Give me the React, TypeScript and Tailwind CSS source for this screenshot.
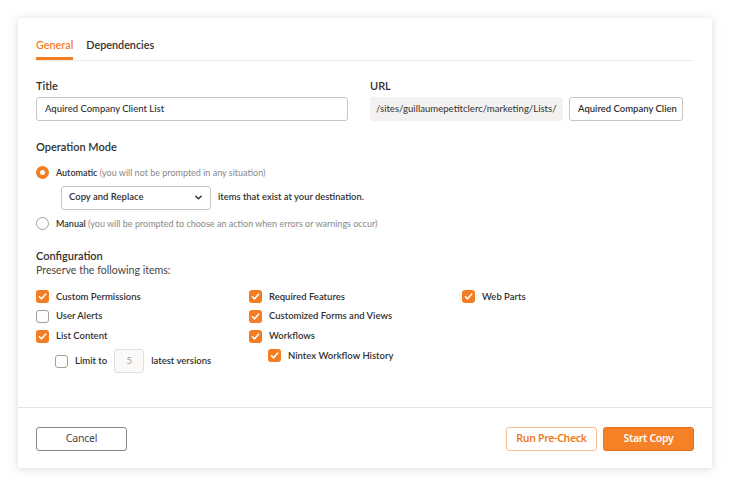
import React from "react";

function Check({ checked }: { checked: boolean }) {
  return checked ? (
    <span className="flex h-[13px] w-[13px] shrink-0 items-center justify-center rounded-[3px] bg-[#f47c22]">
      <svg width="9" height="9" viewBox="0 0 10 10" fill="none">
        <path d="M1.6 5.2 L4 7.6 L8.6 2.2" stroke="white" strokeWidth="1.7" strokeLinecap="round" strokeLinejoin="round" />
      </svg>
    </span>
  ) : (
    <span className="h-[13px] w-[13px] shrink-0 rounded-[3px] border border-[#a19f9d] bg-white" />
  );
}

function CheckItem({ checked, label, className = "" }: { checked: boolean; label: string; className?: string }) {
  return (
    <div className={"flex h-[19.7px] items-center gap-[7px] " + className}>
      <Check checked={checked} />
      <span className="text-[9.5px] font-semibold text-[#323130]">{label}</span>
    </div>
  );
}

function Radio({ checked }: { checked: boolean }) {
  return checked ? (
    <span className="flex h-[13px] w-[13px] shrink-0 items-center justify-center rounded-full bg-[#f47c22]">
      <span className="h-[5px] w-[5px] rounded-full bg-white" />
    </span>
  ) : (
    <span className="h-[13px] w-[13px] shrink-0 rounded-full border border-[#a19f9d] bg-white" />
  );
}

export default function App() {
  return (
    <div
      className="h-[487px] w-[730px] bg-white pt-[18px] pl-[18px]"
      style={{ fontFamily: 'Lato, "Noto Sans", sans-serif' }}
    >
      <div className="flex h-[450px] w-[694px] flex-col rounded-[3px] bg-white shadow-[0_1px_8px_rgba(60,80,110,0.22)]">
        <div className="flex-1 px-[18px] pt-[18px]">
          {/* Tabs */}
          <div className="flex h-[25px] gap-[13px] border-b border-[#edebe9]">
            <div className="flex h-[24px] items-start border-b-[3px] border-[#f47c22] pt-[1px] text-[10.8px] font-semibold leading-[16px] text-[#f47c22]">
              General
            </div>
            <div className="flex h-[24px] items-start pt-[1px] text-[10.8px] font-semibold leading-[16px] text-[#323130]">
              Dependencies
            </div>
          </div>

          {/* Title / URL */}
          <div className="mt-[18px] flex">
            <div className="w-[312px]">
              <div className="text-[11px] font-semibold leading-[14px] text-[#323130]">Title</div>
              <div className="mt-[4px] flex h-[24px] items-center rounded-[3px] border border-[#c8c6c4] px-[8px] text-[9.5px] font-medium text-[#323130]">
                Aquired Company Client List
              </div>
            </div>
            <div className="ml-[22px]">
              <div className="text-[11px] font-semibold leading-[14px] text-[#323130]">URL</div>
              <div className="mt-[4px] flex gap-[6px]">
                <div className="flex h-[24px] w-[193px] items-center overflow-hidden whitespace-nowrap rounded-[3px] bg-[#f3f2f1] px-[6px] text-[9.6px] text-[#323130]">
                  /sites/guillaumepetitclerc/marketing/Lists/
                </div>
                <div className="flex h-[24px] w-[114px] items-center overflow-hidden whitespace-nowrap rounded-[3px] border border-[#c8c6c4] px-[8px] text-[9.5px] font-semibold text-[#323130]">
                  Aquired Company Clien
                </div>
              </div>
            </div>
          </div>

          {/* Operation Mode */}
          <div className="mt-[19px] text-[11px] font-semibold leading-[14px] text-[#323130]">Operation Mode</div>
          <div className="mt-[12px] flex items-center gap-[7px]">
            <Radio checked />
            <span className="text-[9px] text-[#323130]">
              <span className="font-semibold">Automatic</span>{" "}
              <span className="text-[#8a8886]">(you will not be prompted in any situation)</span>
            </span>
          </div>
          <div className="ml-[25px] mt-[6px] flex items-center gap-[7px]">
            <div className="flex h-[24px] w-[150px] items-center justify-between rounded-[3px] border border-[#c8c6c4] pl-[7px] pr-[7px] text-[9.5px] font-semibold text-[#323130]">
              <span>Copy and Replace</span>
              <svg width="9" height="9" viewBox="0 0 10 10" fill="none">
                <path d="M2 3.5 L5 6.5 L8 3.5" stroke="#323130" strokeWidth="1.6" strokeLinecap="round" strokeLinejoin="round" />
              </svg>
            </div>
            <span className="text-[9.4px] font-semibold text-[#323130]">items that exist at your destination.</span>
          </div>
          <div className="mt-[7px] flex items-center gap-[7px]">
            <Radio checked={false} />
            <span className="text-[9px] text-[#323130]">
              <span className="font-semibold">Manual</span>{" "}
              <span className="text-[#8a8886]">(you will be prompted to choose an action when errors or warnings occur)</span>
            </span>
          </div>

          {/* Configuration */}
          <div className="mt-[19px] text-[11px] font-semibold leading-[14px] text-[#323130]">Configuration</div>
          <div className="text-[10.6px] leading-[14px] text-[#484644]">Preserve the following items:</div>
          <div className="mt-[10px] flex">
            <div className="w-[213px]">
              <CheckItem checked label="Custom Permissions" />
              <CheckItem checked={false} label="User Alerts" />
              <CheckItem checked label="List Content" />
              <div className="ml-[19px] mt-[3px] flex h-[24px] items-center gap-[7px]">
                <Check checked={false} />
                <span className="text-[9.5px] font-semibold text-[#323130]">Limit to</span>
                <div className="flex h-[24px] w-[30px] items-center justify-center rounded-[3px] border border-[#e1dfdd] bg-[#faf9f8] text-[9.5px] text-[#a19f9d]">
                  5
                </div>
                <span className="text-[9.5px] font-semibold text-[#323130]">latest versions</span>
              </div>
            </div>
            <div className="w-[213px]">
              <CheckItem checked label="Required Features" />
              <CheckItem checked label="Customized Forms and Views" />
              <CheckItem checked label="Workflows" />
              <CheckItem checked label="Nintex Workflow History" className="ml-[19px]" />
            </div>
            <div>
              <CheckItem checked label="Web Parts" />
            </div>
          </div>
        </div>

        {/* Footer */}
        <div
          className="flex h-[61px] items-start justify-between border-t border-[#e1e5ea] px-[18px] pt-[19px]"
          style={{ fontFamily: '"Noto Sans", sans-serif' }}
        >
          <button className="flex h-[24px] w-[91px] items-center justify-center rounded-[3px] border border-[#8a8886] bg-white text-[10.5px] tracking-[-0.2px] text-[#484644]">
            Cancel
          </button>
          <div className="flex gap-[6px]">
            <button className="flex h-[24px] w-[91px] items-center justify-center rounded-[3px] border border-[#f9bd92] bg-white text-[10.5px] font-semibold tracking-[-0.3px] text-[#f07a22]">
              Run Pre-Check
            </button>
            <button className="flex h-[24px] w-[91px] items-center justify-center rounded-[3px] border border-[#e96f16] bg-[#f58025] text-[10.5px] font-semibold tracking-[-0.3px] text-white">
              Start Copy
            </button>
          </div>
        </div>
      </div>
    </div>
  );
}
